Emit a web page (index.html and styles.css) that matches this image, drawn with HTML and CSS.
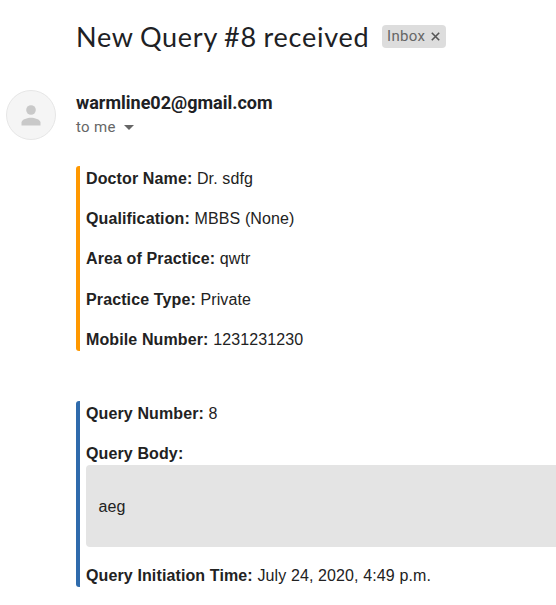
FILE: index.html
```html
<!DOCTYPE html>
<html lang="en">
<head>
<meta charset="utf-8">
<title>New Query #8 received</title>
<link rel="stylesheet" href="styles.css">
</head>
<body>
<main class="mail">
  <header class="subject">
    <h1 class="title">New Query #8 received</h1>
    <span class="label">Inbox <svg class="close" viewBox="0 0 9 9"><path d="M.8.8l7.400 7.400M8.200.8L.8 8.200"/></svg></span>
  </header>
  <section class="sender">
    <svg class="avatar" viewBox="0 0 50 50"><circle cx="25" cy="25" r="24.5" fill="#f5f5f5" stroke="#e6e6e6"/><circle cx="25" cy="20" r="4.800" fill="#c9c9c9"/><path d="M15.500 35.500v-3c0-3.200 6.300-4.800 9.500-4.800s9.500 1.600 9.500 4.800v3z" fill="#c9c9c9"/></svg>
    <div>
      <div class="from">warmline02@gmail.com</div>
      <div class="to">to me <i class="caret"></i></div>
    </div>
  </section>
  <section class="card doctor">
    <p><b>Doctor Name:</b> Dr. sdfg</p>
    <p><b>Qualification:</b> MBBS (None)</p>
    <p><b>Area of Practice:</b> qwtr</p>
    <p><b>Practice Type:</b> Private</p>
    <p><b>Mobile Number:</b> 1231231230</p>
  </section>
  <section class="card query">
    <p><b>Query Number:</b> 8</p>
    <p><b>Query Body:</b></p>
    <div class="quote">aeg</div>
    <p><b>Query Initiation Time:</b> July 24, 2020, 4:49 p.m.</p>
  </section>
</main>
</body>
</html>
```
FILE: styles.css
```css
* { box-sizing: border-box; }
body { margin: 0; background: #fff; color: #222; font-family: "Liberation Sans", Arial, sans-serif; overflow: hidden; }
.mail { width: 556px; height: 605px; overflow: hidden; }
.subject { display: flex; padding: 18px 0 0 76px; height: 90px; }
.title { width: 294px; margin: 0; font: 400 27px/38px Lato, sans-serif; letter-spacing: .75px; word-spacing: -1px; color: #202124; white-space: nowrap; }
.label { display: flex; align-items: center; gap: 6px; width: 64px; height: 23px; margin: 7px 0 0 12px; padding: 0 6px 2px 5px; background: #ddd; border-radius: 4px; color: #666; font: 15px Roboto, sans-serif; letter-spacing: .3px; }
.close { flex: none; width: 9px; height: 9px; fill: none; stroke: #555; stroke-width: 1.6; margin-top: 1px; }
.sender { display: flex; gap: 20px; height: 76px; padding-left: 6px; }
.avatar { width: 50px; height: 50px; }
.from { margin-top: 3px; font: 700 18px/20px Roboto, sans-serif; color: #202124; }
.to { display: flex; align-items: center; gap: 8px; margin-top: 4px; font: 15px/20px Roboto, sans-serif; letter-spacing: .3px; color: #666; }
.caret { border: 5px solid transparent; border-top-color: #666; border-bottom: 0; }
.card { margin-left: 76px; border-left: 4px solid; border-radius: 3px; padding: 2px 0 2px 6px; font-size: 16px; line-height: 21px; letter-spacing: .12px; }
.card p { margin: 0 0 19.2px; white-space: nowrap; }
.card p:last-child { margin-bottom: 0; }
.doctor { height: 185px; border-color: #ff9800; }
.query { height: 186px; margin-top: 50px; border-color: #2f6bac; }
.query p:nth-child(2) { margin-bottom: 1px; }
.quote { height: 82px; margin-bottom: 18px; padding: 31px 12.5px; background: #e4e4e4; border-radius: 4px 0 0 4px; }
b { font-weight: 700; }
```
